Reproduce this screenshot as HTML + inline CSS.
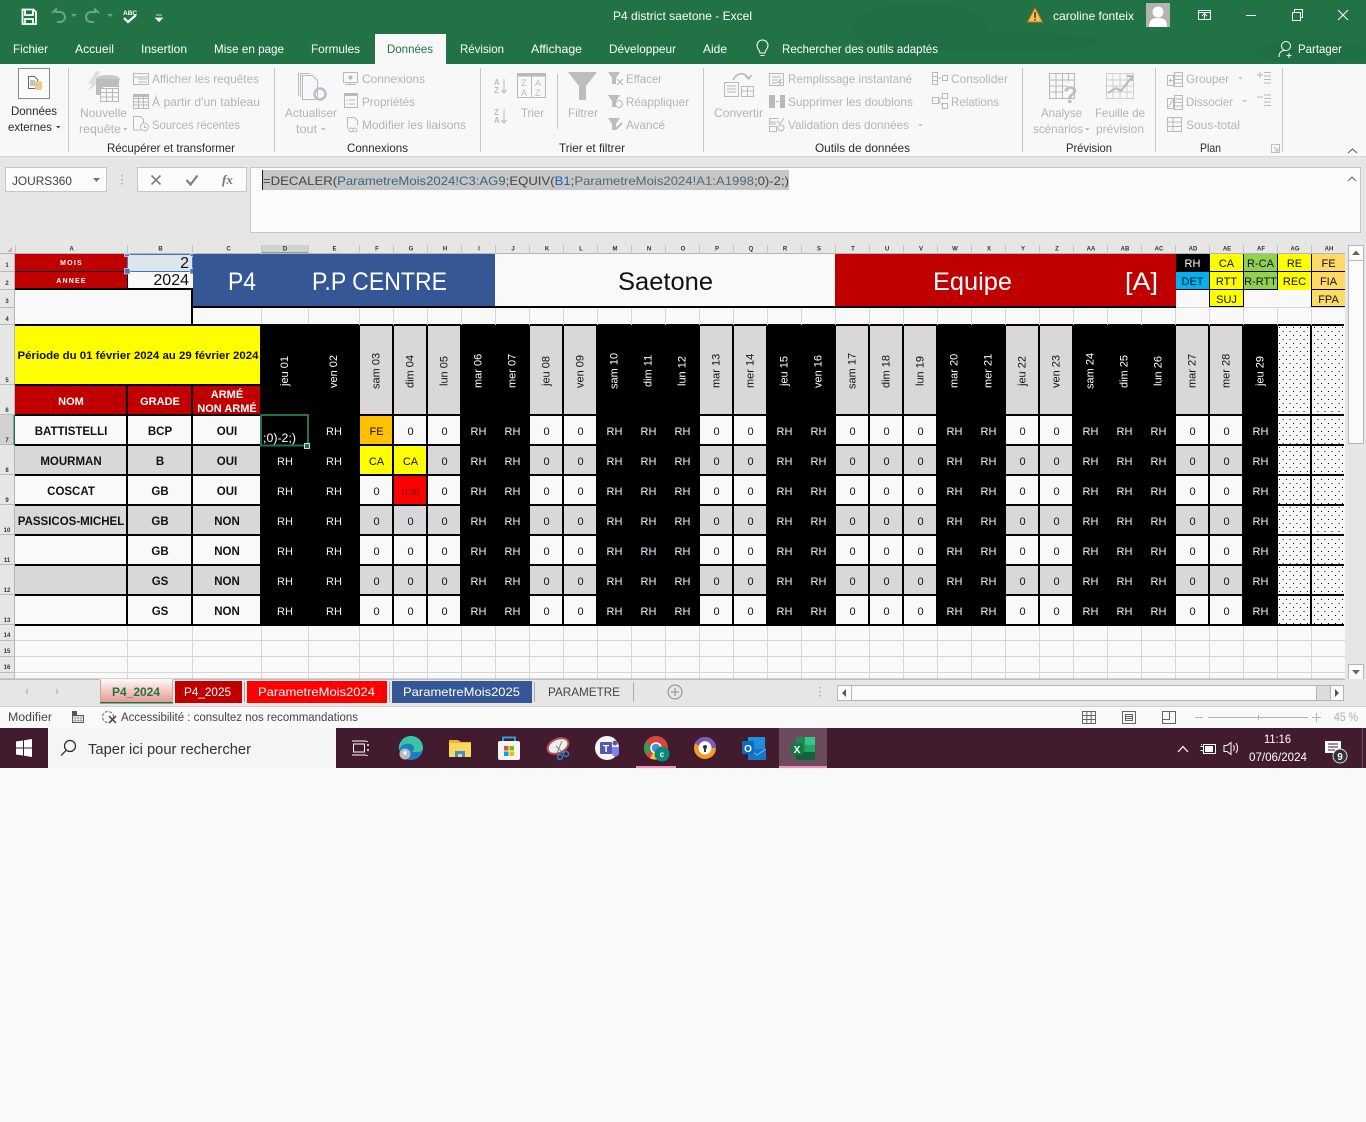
<!DOCTYPE html>
<html lang="fr"><head><meta charset="utf-8"><title>P4 district saetone - Excel</title>
<style>
html,body{margin:0;padding:0;background:#f9f9f9}
body{width:1366px;height:1122px;position:relative;overflow:hidden;font-family:"Liberation Sans",sans-serif}
#g{position:absolute;left:15px;top:324px;width:1329px;height:302px;box-sizing:border-box;padding:2px 0;background:#000;display:grid;gap:2px;
grid-template-columns:111px 63px 67px 46px 48px repeat(29,32px);
grid-template-rows:58px 28px repeat(7,28px);font-size:11px;color:#111}
#g>div{display:contents}
#g span{display:flex;align-items:center;justify-content:center;white-space:nowrap;overflow:hidden;padding:4px 0 0 1px;box-sizing:border-box}
#g>div>span:nth-child(4),#g>div>span:nth-child(5){padding-left:0}
#g .y{grid-column:1/4;background:#ff0;font:bold 11.45px "Liberation Sans",sans-serif;color:#111;padding:1px 0 0 1px}
#g .h{grid-row:1/3;background:#000;color:#fff;writing-mode:vertical-rl;transform:rotate(180deg);font-size:11px;padding:0 0 2px 0}
#g .h:nth-child(n+4){padding-right:1px}
#g .hg{background:#d9d7da;color:#111}
.hr{background:#c00000;color:#fff;font:bold 11px/14px "Liberation Sans",sans-serif;text-align:center}
.n{background:#f9f9f9;font-weight:bold;font-size:11.5px}
.gr .n,.gr .z{background:#d9d7da}
.k{background:#000;color:#eef4fa}
.z{background:#f9f9f9}
.d{background:#f9f9f9}
#c{position:absolute;left:0;top:0;z-index:2}
text{font-family:"Liberation Sans",sans-serif;font-size:12px}
.w{fill:#fff}.l{fill:#b4b4b4}.b{fill:#2b2b2b}.s{stroke:#b9b9b9;fill:none;stroke-width:1}
.f{fill:#bdbdbd}
.rn{font-size:6px;font-weight:bold;fill:#333;text-anchor:middle}
.cn{font-size:6px;font-weight:bold;fill:#333;text-anchor:middle}
.m{text-anchor:middle;font-size:11px}
</style></head><body>
<div id="g">
<span class="y" style="grid-column:1/4">Période du 01 février 2024 au 29 février 2024</span>
<span class="h" style="grid-column:4">jeu 01</span><span class="h" style="grid-column:5">ven 02</span><span class="h hg" style="grid-column:6">sam 03</span><span class="h hg" style="grid-column:7">dim 04</span><span class="h hg" style="grid-column:8">lun 05</span><span class="h" style="grid-column:9">mar 06</span><span class="h" style="grid-column:10">mer 07</span><span class="h hg" style="grid-column:11">jeu 08</span><span class="h hg" style="grid-column:12">ven 09</span><span class="h" style="grid-column:13">sam 10</span><span class="h" style="grid-column:14">dim 11</span><span class="h" style="grid-column:15">lun 12</span><span class="h hg" style="grid-column:16">mar 13</span><span class="h hg" style="grid-column:17">mer 14</span><span class="h" style="grid-column:18">jeu 15</span><span class="h" style="grid-column:19">ven 16</span><span class="h hg" style="grid-column:20">sam 17</span><span class="h hg" style="grid-column:21">dim 18</span><span class="h hg" style="grid-column:22">lun 19</span><span class="h" style="grid-column:23">mar 20</span><span class="h" style="grid-column:24">mer 21</span><span class="h hg" style="grid-column:25">jeu 22</span><span class="h hg" style="grid-column:26">ven 23</span><span class="h" style="grid-column:27">sam 24</span><span class="h" style="grid-column:28">dim 25</span><span class="h" style="grid-column:29">lun 26</span><span class="h hg" style="grid-column:30">mar 27</span><span class="h hg" style="grid-column:31">mer 28</span><span class="h" style="grid-column:32">jeu 29</span>
<span class="d" style="grid-column:33;grid-row:1/3"></span><span class="d" style="grid-column:34;grid-row:1/3"></span>
<span class="hr" style="grid-column:1;grid-row:2">NOM</span><span class="hr" style="grid-column:2;grid-row:2">GRADE</span><span class="hr" style="grid-column:3;grid-row:2">ARMÉ<br>NON ARMÉ</span>
<div><span class="n">BATTISTELLI</span><span class="n">BCP</span><span class="n">OUI</span><span class="k"></span><span class="k">RH</span><span class="z" style="background:#ffc000">FE</span><span class="z">0</span><span class="z">0</span><span class="k">RH</span><span class="k">RH</span><span class="z">0</span><span class="z">0</span><span class="k">RH</span><span class="k">RH</span><span class="k">RH</span><span class="z">0</span><span class="z">0</span><span class="k">RH</span><span class="k">RH</span><span class="z">0</span><span class="z">0</span><span class="z">0</span><span class="k">RH</span><span class="k">RH</span><span class="z">0</span><span class="z">0</span><span class="k">RH</span><span class="k">RH</span><span class="k">RH</span><span class="z">0</span><span class="z">0</span><span class="k">RH</span><span class="d"></span><span class="d"></span></div>
<div class="gr"><span class="n">MOURMAN</span><span class="n">B</span><span class="n">OUI</span><span class="k">RH</span><span class="k">RH</span><span class="z" style="background:#ff0">CA</span><span class="z" style="background:#ff0">CA</span><span class="z">0</span><span class="k">RH</span><span class="k">RH</span><span class="z">0</span><span class="z">0</span><span class="k">RH</span><span class="k">RH</span><span class="k">RH</span><span class="z">0</span><span class="z">0</span><span class="k">RH</span><span class="k">RH</span><span class="z">0</span><span class="z">0</span><span class="z">0</span><span class="k">RH</span><span class="k">RH</span><span class="z">0</span><span class="z">0</span><span class="k">RH</span><span class="k">RH</span><span class="k">RH</span><span class="z">0</span><span class="z">0</span><span class="k">RH</span><span class="d"></span><span class="d"></span></div>
<div><span class="n">COSCAT</span><span class="n">GB</span><span class="n">OUI</span><span class="k">RH</span><span class="k">RH</span><span class="z">0</span><span class="z" style="background:#f00;color:#7a0000">mal</span><span class="z">0</span><span class="k">RH</span><span class="k">RH</span><span class="z">0</span><span class="z">0</span><span class="k">RH</span><span class="k">RH</span><span class="k">RH</span><span class="z">0</span><span class="z">0</span><span class="k">RH</span><span class="k">RH</span><span class="z">0</span><span class="z">0</span><span class="z">0</span><span class="k">RH</span><span class="k">RH</span><span class="z">0</span><span class="z">0</span><span class="k">RH</span><span class="k">RH</span><span class="k">RH</span><span class="z">0</span><span class="z">0</span><span class="k">RH</span><span class="d"></span><span class="d"></span></div>
<div class="gr"><span class="n">PASSICOS-MICHEL</span><span class="n">GB</span><span class="n">NON</span><span class="k">RH</span><span class="k">RH</span><span class="z">0</span><span class="z">0</span><span class="z">0</span><span class="k">RH</span><span class="k">RH</span><span class="z">0</span><span class="z">0</span><span class="k">RH</span><span class="k">RH</span><span class="k">RH</span><span class="z">0</span><span class="z">0</span><span class="k">RH</span><span class="k">RH</span><span class="z">0</span><span class="z">0</span><span class="z">0</span><span class="k">RH</span><span class="k">RH</span><span class="z">0</span><span class="z">0</span><span class="k">RH</span><span class="k">RH</span><span class="k">RH</span><span class="z">0</span><span class="z">0</span><span class="k">RH</span><span class="d"></span><span class="d"></span></div>
<div><span class="n"></span><span class="n">GB</span><span class="n">NON</span><span class="k">RH</span><span class="k">RH</span><span class="z">0</span><span class="z">0</span><span class="z">0</span><span class="k">RH</span><span class="k">RH</span><span class="z">0</span><span class="z">0</span><span class="k">RH</span><span class="k">RH</span><span class="k">RH</span><span class="z">0</span><span class="z">0</span><span class="k">RH</span><span class="k">RH</span><span class="z">0</span><span class="z">0</span><span class="z">0</span><span class="k">RH</span><span class="k">RH</span><span class="z">0</span><span class="z">0</span><span class="k">RH</span><span class="k">RH</span><span class="k">RH</span><span class="z">0</span><span class="z">0</span><span class="k">RH</span><span class="d"></span><span class="d"></span></div>
<div class="gr"><span class="n"></span><span class="n">GS</span><span class="n">NON</span><span class="k">RH</span><span class="k">RH</span><span class="z">0</span><span class="z">0</span><span class="z">0</span><span class="k">RH</span><span class="k">RH</span><span class="z">0</span><span class="z">0</span><span class="k">RH</span><span class="k">RH</span><span class="k">RH</span><span class="z">0</span><span class="z">0</span><span class="k">RH</span><span class="k">RH</span><span class="z">0</span><span class="z">0</span><span class="z">0</span><span class="k">RH</span><span class="k">RH</span><span class="z">0</span><span class="z">0</span><span class="k">RH</span><span class="k">RH</span><span class="k">RH</span><span class="z">0</span><span class="z">0</span><span class="k">RH</span><span class="d"></span><span class="d"></span></div>
<div><span class="n"></span><span class="n">GS</span><span class="n">NON</span><span class="k">RH</span><span class="k">RH</span><span class="z">0</span><span class="z">0</span><span class="z">0</span><span class="k">RH</span><span class="k">RH</span><span class="z">0</span><span class="z">0</span><span class="k">RH</span><span class="k">RH</span><span class="k">RH</span><span class="z">0</span><span class="z">0</span><span class="k">RH</span><span class="k">RH</span><span class="z">0</span><span class="z">0</span><span class="z">0</span><span class="k">RH</span><span class="k">RH</span><span class="z">0</span><span class="z">0</span><span class="k">RH</span><span class="k">RH</span><span class="k">RH</span><span class="z">0</span><span class="z">0</span><span class="k">RH</span><span class="d"></span><span class="d"></span></div>
</div>

<svg id="c" width="1366" height="1122" viewBox="0 0 1366 1122" xmlns="http://www.w3.org/2000/svg">
<defs>
<pattern id="dots" x="1278" y="326" width="7" height="8" patternUnits="userSpaceOnUse"><rect x="1" y="1" width="1" height="1" fill="#000"/><rect x="4.5" y="5" width="1" height="1" fill="#000"/></pattern>
<pattern id="gl" x="359" y="0" width="34" height="10" patternUnits="userSpaceOnUse"><rect width="1" height="10" fill="#d6d6d6"/></pattern>
<linearGradient id="tab" x1="0" y1="0" x2="0" y2="1"><stop offset="0" stop-color="#fbfbfb"/><stop offset=".5" stop-color="#f3c9c4"/><stop offset="1" stop-color="#e79a92"/></linearGradient>
</defs>

<!-- title bar -->
<rect width="1366" height="64" fill="#217346"/>
<g fill="#206f44"><ellipse cx="920" cy="28" rx="70" ry="24"/><ellipse cx="1010" cy="42" rx="90" ry="10"/><ellipse cx="1310" cy="52" rx="56" ry="12"/></g>
<rect x="375" y="34" width="71" height="30" fill="#f8f8f8"/>
<path d="M22.5 9.5h11l2.5 2.5v12h-13.500zM25 10v5h8v-5M25 24v-5h8v5" fill="none" stroke="#fff" stroke-width="1.800"/>
<path d="M52 13l4-3.500v2.500h4a5 5 0 0 1 0 10h-3" fill="none" stroke="#6fa387" stroke-width="2"/><path d="M71 14l3 3 3-3zM107 14l3 3 3-3z" fill="#6fa387"/>
<path d="M99 13l-4-3.500v2.500h-4a5 5 0 0 0 0 10h3" fill="none" stroke="#6fa387" stroke-width="2"/>
<text x="123" y="15" font-size="6.500" style="font-size:6.500px;font-weight:bold" class="w">ABC</text>
<path d="M124 18l4 4 8-7" fill="none" stroke="#fff" stroke-width="2.200"/>
<path d="M156 15h6M155.500 18h7l-3.500 3.500z" stroke="#fff" fill="#fff" stroke-width=".8"/>
<text x="613" y="20" textLength="139" lengthAdjust="spacingAndGlyphs" class="w">P4 district saetone  -  Excel</text>
<path d="M1035 8l7.500 14h-15z" fill="#f6c24c" stroke="#d2691e"/><rect x="1034.300" y="12" width="1.500" height="6" fill="#333"/><rect x="1034.300" y="19" width="1.500" height="1.500" fill="#333"/>
<text x="1053" y="20" textLength="81" lengthAdjust="spacingAndGlyphs" class="w">caroline fonteix</text>
<rect x="1146" y="3" width="24" height="24" fill="#b3b3b3"/><circle cx="1158" cy="12" r="5.500" fill="#fff"/><path d="M1149 27c0-8 4-9 9-9s9 1 9 9z" fill="#fff"/>
<path d="M1198.500 10.500h12v9h-12zM1198.500 12.500h12M1204.500 19v-5M1202 16l2.500-2.500 2.500 2.500" fill="none" stroke="#fff"/>
<path d="M1246 15.500h10" stroke="#fff"/><path d="M1292.500 12.500h8v8h-8zM1294.500 12v-2.500h8v8h-2" fill="none" stroke="#fff"/><path d="M1338 10l10 10M1348 10l-10 10" stroke="#fff" stroke-width="1.100"/>

<text x="13" y="53" textLength="35" lengthAdjust="spacingAndGlyphs" class="w">Fichier</text>
<text x="75" y="53" textLength="39" lengthAdjust="spacingAndGlyphs" class="w">Accueil</text>
<text x="141" y="53" textLength="46" lengthAdjust="spacingAndGlyphs" class="w">Insertion</text>
<text x="214" y="53" textLength="70" lengthAdjust="spacingAndGlyphs" class="w">Mise en page</text>
<text x="311" y="53" textLength="49" lengthAdjust="spacingAndGlyphs" class="w">Formules</text>
<text x="387" y="53" textLength="46" lengthAdjust="spacingAndGlyphs" fill="#217346">Données</text>
<text x="460" y="53" textLength="44" lengthAdjust="spacingAndGlyphs" class="w">Révision</text>
<text x="531" y="53" textLength="51" lengthAdjust="spacingAndGlyphs" class="w">Affichage</text>
<text x="609" y="53" textLength="67" lengthAdjust="spacingAndGlyphs" class="w">Développeur</text>
<text x="703" y="53" textLength="24" lengthAdjust="spacingAndGlyphs" class="w">Aide</text>
<path d="M760 53c0-3-3-4-3-7.500a5.500 5.500 0 0 1 11 0c0 3.500-3 4.500-3 7.500zM760.500 55.500h4" fill="none" stroke="#fff"/>
<text x="782" y="53" textLength="156" lengthAdjust="spacingAndGlyphs" class="w">Rechercher des outils adaptés</text>
<circle cx="1286" cy="46" r="4.500" fill="none" stroke="#fff"/><path d="M1279 57c0-5 3-6.500 6-6.500M1289 53v5M1286.500 55.500h5" fill="none" stroke="#fff"/>
<text x="1298" y="53" textLength="44" lengthAdjust="spacingAndGlyphs" class="w">Partager</text>

<!-- ribbon -->
<rect y="64" width="1366" height="92" fill="#f8f8f8"/><rect y="156" width="1366" height="1" fill="#d8d8d8"/>
<path d="M68.500 68v84M274.500 68v84M480.500 68v84M703.500 68v84M1022.500 68v84M1155.500 68v84M1282.500 68v84M557.500 74v55" stroke="#c6c6c6" fill="none"/>
<rect x="18.500" y="68.500" width="31" height="30" fill="#fbfbfb" stroke="#8a8a8a"/>
<path d="M28.500 76.500h6l3 3v9h-9z" fill="#fff" stroke="#666"/><path d="M30 81h5M30 83h5M30 85h5" stroke="#888"/><rect x="35" y="81" width="7" height="9" rx="2" fill="#f2c691"/>
<text x="11" y="115" textLength="46" lengthAdjust="spacingAndGlyphs" class="b">Données</text>
<text x="8" y="131" textLength="44" lengthAdjust="spacingAndGlyphs" class="b">externes</text><path d="M56 126h4.500l-2.250 2.500z" fill="#444"/>

<path d="M96 71l-8 13h4l-5 8 13-11h-5l5-9z" fill="#dedede"/><ellipse cx="108" cy="79" rx="12" ry="4" fill="#c8c8c8"/><path d="M96 79v16h7v-8h16v-8" fill="#bdbdbd"/>
<rect x="100.500" y="88.500" width="18" height="13" fill="#f8f8f8" stroke="#b9b9b9"/><path d="M100 92.500h19M100 97h19M106.500 88v13M112.500 88v13" class="s"/>
<g class="l"><text x="80" y="117" textLength="47" lengthAdjust="spacingAndGlyphs">Nouvelle</text><text x="79" y="133" textLength="42" lengthAdjust="spacingAndGlyphs">requête</text></g><path d="M123 128h4.500l-2.250 2.500z" fill="#b9b9b9"/>
<path d="M133.500 73.500h15v11h-15zM133.500 77h15M138 79h9M138 82h9" class="s"/>
<rect x="133.500" y="94.500" width="15" height="14" class="s"/><path d="M133.500 98.500h15M133.500 102h15M133.500 105h15M138.500 95v13M143.500 95v13" class="s"/><rect x="133" y="94" width="16" height="3" fill="#b9b9b9"/>
<path d="M133.500 116.500h7l3 3v4M141 130h-7.500v-13.500" class="s"/><circle cx="144.500" cy="127" r="4" class="s"/><path d="M144.500 125v2.500h2" class="s"/>
<g class="l"><text x="152" y="83" textLength="107" lengthAdjust="spacingAndGlyphs">Afficher les requêtes</text><text x="152" y="106" textLength="108" lengthAdjust="spacingAndGlyphs">À partir d'un tableau</text><text x="152" y="129" textLength="88" lengthAdjust="spacingAndGlyphs">Sources récentes</text></g>
<text x="107" y="152" textLength="128" lengthAdjust="spacingAndGlyphs" class="b">Récupérer et transformer</text>

<path d="M298.500 72.500v23M300.500 73.500h9l1 0M302.500 75.500h10l5 5v19h-15z" class="s"/><path d="M300.500 73v24" class="s"/>
<circle cx="320" cy="94" r="5.500" fill="none" stroke="#c4b8d2" stroke-width="2.500"/>
<g class="l"><text x="285" y="117" textLength="52" lengthAdjust="spacingAndGlyphs">Actualiser</text><text x="296" y="133" textLength="21" lengthAdjust="spacingAndGlyphs">tout</text></g><path d="M321 128h4.500l-2.250 2.500z" fill="#b9b9b9"/>
<path d="M343.500 72.500h14v10h-14zM350.500 82.500v2M345 84.500h11" class="s"/><circle cx="350.500" cy="77.500" r="2" fill="#b9b9b9"/>
<rect x="344.500" y="93.500" width="13" height="14" class="s"/><rect x="344" y="93" width="14" height="3" fill="#b9b9b9"/><path d="M349 100h6M349 104h6M346 100h1.500M346 104h1.500" class="s"/>
<path d="M347.500 117.500h7l3 3v5M347.500 117.500v11" class="s"/><circle cx="351" cy="130" r="2" class="s"/><circle cx="355" cy="130" r="2" class="s"/>
<g class="l"><text x="362" y="83" textLength="63" lengthAdjust="spacingAndGlyphs">Connexions</text><text x="362" y="106" textLength="53" lengthAdjust="spacingAndGlyphs">Propriétés</text><text x="362" y="129" textLength="104" lengthAdjust="spacingAndGlyphs">Modifier les liaisons</text></g>
<text x="347" y="152" textLength="61" lengthAdjust="spacingAndGlyphs" class="b">Connexions</text>

<g style="font-weight:bold" class="f"><text x="494" y="85" style="font-size:8px">A</text><text x="494" y="93" style="font-size:8px">Z</text><text x="494" y="115" style="font-size:8px">Z</text><text x="494" y="123" style="font-size:8px">A</text></g>
<path d="M504 79v13M501.500 90l2.500 3 2.500-3M504 109v13M501.500 120l2.500 3 2.500-3" class="s"/>
<rect x="517.500" y="73.500" width="28" height="24" class="s"/><rect x="517" y="73" width="29" height="3.500" fill="#b9b9b9"/><path d="M531.500 76v21" class="s"/>
<g class="f"><text x="521" y="86" style="font-size:9px">Z</text><text x="535" y="86" style="font-size:9px">A</text><text x="521" y="96" style="font-size:9px">A</text><text x="535" y="96" style="font-size:9px">Z</text></g>
<text x="521" y="117" textLength="23" lengthAdjust="spacingAndGlyphs" class="l">Trier</text>
<path d="M568 72h29l-11 14v14h-7v-14z" fill="#bdbdbd"/>
<text x="568" y="117" textLength="30" lengthAdjust="spacingAndGlyphs" class="l">Filtrer</text>
<path d="M608 72h12l-4 6v6h-4v-6z" class="f"/><path d="M617 79l6 6M623 79l-6 6" stroke="#b9b9b9" stroke-width="1.200"/>
<path d="M608 95h12l-4 6v6h-4v-6z" class="f"/><circle cx="619" cy="104" r="3.500" class="s"/>
<path d="M608 118h12l-4 6v6h-4v-6z" class="f"/><path d="M616 129l6-6" stroke="#b9b9b9" stroke-width="2"/>
<g class="l"><text x="626" y="83" textLength="36" lengthAdjust="spacingAndGlyphs">Effacer</text><text x="626" y="106" textLength="63" lengthAdjust="spacingAndGlyphs">Réappliquer</text><text x="626" y="129" textLength="39" lengthAdjust="spacingAndGlyphs">Avancé</text></g>
<text x="559" y="152" textLength="66" lengthAdjust="spacingAndGlyphs" class="b">Trier et filtrer</text>

<path d="M724.500 82.500h14v14h-14zM727 86h9M727 89h9M727 92h9M741.500 86.500h12v10h-12zM741.500 91h12M747.500 87v9" class="s"/><path d="M733 80c4-8 12-8 15-2M745 75l3.500 4 3-4" fill="none" stroke="#b9b9b9" stroke-width="1.500"/>
<text x="714" y="117" textLength="49" lengthAdjust="spacingAndGlyphs" class="l">Convertir</text>
<path d="M769.500 73.500h14v12h-14zM772 77h9M772 80h6M772 83h5" class="s"/><path d="M780 79l-3 4h3l-2 4 5-5h-3l2-3z" class="f"/>
<rect x="769" y="95" width="6" height="13" fill="#b9b9b9"/><rect x="780" y="95" width="5" height="13" fill="#b9b9b9"/><path d="M776 101.500h3" class="s"/>
<path d="M769.500 118.500h9M769.500 122h6M769.500 118v6h7M769.500 126.500h7v5h-7z" class="s"/><path d="M777 121l3 3 4-6" class="s"/><circle cx="781" cy="128" r="3" class="s"/>
<g class="l"><text x="788" y="83" textLength="124" lengthAdjust="spacingAndGlyphs">Remplissage instantané</text><text x="788" y="106" textLength="125" lengthAdjust="spacingAndGlyphs">Supprimer les doublons</text><text x="788" y="129" textLength="121" lengthAdjust="spacingAndGlyphs">Validation des données</text></g><path d="M918 124h5l-2.500 2.500z" fill="#c8c8c8"/>
<text x="815" y="152" textLength="95" lengthAdjust="spacingAndGlyphs" class="b">Outils de données</text>
<path d="M932.500 72.500h5v12h-5zM932.500 76.500h5M932.500 80.500h5M942.500 75.500h5v5h-5zM938 78h3" class="s"/>
<path d="M932.500 97.500h6v6h-6zM942.500 93.500h5v5h-5zM942.500 103.500h5v5h-5zM939 100l3-3M939 101l3 4" class="s"/>
<g class="l"><text x="951" y="83" textLength="57" lengthAdjust="spacingAndGlyphs">Consolider</text><text x="951" y="106" textLength="48" lengthAdjust="spacingAndGlyphs">Relations</text></g>

<path d="M1049.500 73.500h25v25h-25zM1049.500 80h25M1049.500 86h18M1049.500 92h14M1056 73.500v25M1062.500 73.500v25M1068.500 73.500v8" class="s"/>
<text x="1063" y="103" style="font-size:24px;font-weight:bold" class="f">?</text>
<path d="M1106.500 73.500h27v25h-27zM1106.500 80h27M1106.500 86h27M1106.500 92h27M1113 73.500v25M1120 73.500v25M1127 73.500v25" stroke="#cfcfcf" fill="none"/><path d="M1108 93l8-5 5 3 10-13M1127 76h5v5" fill="none" stroke="#b9b9b9" stroke-width="2"/>
<g class="l"><text x="1041" y="117" textLength="41" lengthAdjust="spacingAndGlyphs">Analyse</text><text x="1033" y="133" textLength="50" lengthAdjust="spacingAndGlyphs">scénarios</text><text x="1095" y="117" textLength="50" lengthAdjust="spacingAndGlyphs">Feuille de</text><text x="1096" y="133" textLength="48" lengthAdjust="spacingAndGlyphs">prévision</text></g><path d="M1085 128h4.500l-2.250 2.500z" fill="#b9b9b9"/>
<text x="1066" y="152" textLength="46" lengthAdjust="spacingAndGlyphs" class="b">Prévision</text>

<path d="M1167.500 75.500h6v10h-6zM1174.500 72.500h8v14h-8zM1174.500 76h8M1174.500 79.500h8M1174.500 83h8M1168.500 80.500h4M1170.500 78.500v4" class="s"/>
<path d="M1167.500 98.500h6v10h-6zM1174.500 95.500h8v14h-8zM1174.500 99h8M1174.500 102.500h8M1174.500 106h8M1168.500 107l4-7" class="s"/>
<path d="M1167.500 117.500h14v14h-14zM1167.500 122h14M1167.500 126.500h14M1173 117.500v14" class="s"/>
<g class="l"><text x="1186" y="83" textLength="43" lengthAdjust="spacingAndGlyphs">Grouper</text><text x="1186" y="106" textLength="47" lengthAdjust="spacingAndGlyphs">Dissocier</text><text x="1186" y="129" textLength="54" lengthAdjust="spacingAndGlyphs">Sous-total</text></g>
<path d="M1238 77h5l-2.500 2.500zM1242 100h5l-2.500 2.500z" fill="#c8c8c8"/>
<path d="M1257 75h6M1260 72v6M1264 72.500h7M1264 76h7M1264 79.500h7M1264 83h7M1257 97h6M1264 95h7M1264 98.500h7M1264 102h7M1264 105.500h7" class="s"/>
<text x="1200" y="152" textLength="21" lengthAdjust="spacingAndGlyphs" class="b">Plan</text>
<path d="M1271.500 144.500h8v8h-8zM1274 147l4 4M1278 148v3h-3" stroke="#bdbdbd" fill="none"/>
<path d="M1348 153l4.500-4 4.500 4" fill="none" stroke="#555"/>

<!-- formula bar -->
<rect y="157" width="1366" height="88" fill="#e6e7e5"/>
<rect x="5.500" y="167.500" width="101" height="24" fill="#fbfbfb" stroke="#c6c6c6"/>
<text x="12" y="185" textLength="60" lengthAdjust="spacingAndGlyphs" fill="#444">JOURS360</text><path d="M93 178h7l-3.500 4z" fill="#777"/>
<path d="M122 175v1.500M122 179v1.500M122 183v1.500" stroke="#aaa" stroke-width="1.500"/>
<rect x="137.500" y="167.500" width="109" height="24" fill="#fbfbfb" stroke="#c6c6c6"/>
<path d="M151.500 175.500l9 9M160.500 175.500l-9 9" stroke="#808080" stroke-width="1.600"/><path d="M186.500 180l4 4.500 7-9" fill="none" stroke="#808080" stroke-width="2.200"/>
<text x="222" y="184" style="font-family:'Liberation Serif',serif;font-style:italic;font-weight:bold;font-size:13px" fill="#777">fx</text>
<rect x="250.500" y="167.500" width="1110" height="65" fill="#fbfbfb" stroke="#c6c6c6"/>
<rect x="262" y="170" width="527" height="20" fill="#c6c6c6"/><rect x="262" y="170" width="1" height="20" fill="#222"/>
<text x="263" y="185" textLength="526" lengthAdjust="spacingAndGlyphs" fill="#444">=DECALER(<tspan fill="#3a6480">ParametreMois2024!C3:AG9</tspan>;EQUIV(<tspan fill="#1e5fb0">B1</tspan>;<tspan fill="#4f6b73">ParametreMois2024!A1:A1998</tspan>;0)-2;)</text>
<path d="M1348 181l4-4 4 4" fill="none" stroke="#666"/>

<!-- sheet frame -->
<rect y="245" width="1346" height="9" fill="#e6e7e5"/>
<rect y="254" width="15" height="426" fill="#e6e7e5"/>
<rect x="261" y="245" width="47" height="9" fill="#d2d2d2"/><rect x="261" y="252.500" width="47" height="1.500" fill="#217346"/>
<rect y="253" width="1346" height="1" fill="#b5b5b5"/>
<rect y="254" x="14" width="1" height="426" fill="#b5b5b5"/>
<rect x="0" y="415" width="15" height="30" fill="#d2d2d2"/><rect x="13.500" y="415" width="1.500" height="30" fill="#217346"/>
<path d="M12 247v5h-5z" fill="#bbb"/>
<path d="M15.500 245v9M127.500 245v9M192.500 245v9M261.500 245v9M308.500 245v9M359.500 245v9M393.500 245v9M427.500 245v9M461.500 245v9M495.500 245v9M529.500 245v9M563.500 245v9M597.500 245v9M631.500 245v9M665.500 245v9M699.500 245v9M733.500 245v9M767.500 245v9M801.500 245v9M835.500 245v9M869.500 245v9M903.500 245v9M937.500 245v9M971.500 245v9M1005.500 245v9M1039.500 245v9M1073.500 245v9M1107.500 245v9M1141.500 245v9M1175.500 245v9M1209.500 245v9M1243.500 245v9M1277.500 245v9M1311.500 245v9M1345.500 245v9" stroke="#c4c4c4" fill="none"/>
<path d="M0 271.500h15M0 289.500h15M0 307.500h15M0 324.500h15M0 384.500h15M0 414.500h15M0 444.500h15M0 474.500h15M0 504.500h15M0 534.500h15M0 564.500h15M0 594.500h15M0 624.500h15M0 640.500h15M0 656.500h15M0 672.500h15" stroke="#b9b9b9"/>
<g class="cn"><text class="cn" x="71.500" y="250.500">A</text><text class="cn" x="160.500" y="250.500">B</text><text class="cn" x="228.500" y="250.500">C</text><text class="cn" x="285" y="250.500">D</text><text class="cn" x="334.500" y="250.500">E</text><text class="cn" x="377" y="250.500">F</text><text class="cn" x="411" y="250.500">G</text><text class="cn" x="445" y="250.500">H</text><text class="cn" x="479" y="250.500">I</text><text class="cn" x="513" y="250.500">J</text><text class="cn" x="547" y="250.500">K</text><text class="cn" x="581" y="250.500">L</text><text class="cn" x="615" y="250.500">M</text><text class="cn" x="649" y="250.500">N</text><text class="cn" x="683" y="250.500">O</text><text class="cn" x="717" y="250.500">P</text><text class="cn" x="751" y="250.500">Q</text><text class="cn" x="785" y="250.500">R</text><text class="cn" x="819" y="250.500">S</text><text class="cn" x="853" y="250.500">T</text><text class="cn" x="887" y="250.500">U</text><text class="cn" x="921" y="250.500">V</text><text class="cn" x="955" y="250.500">W</text><text class="cn" x="989" y="250.500">X</text><text class="cn" x="1023" y="250.500">Y</text><text class="cn" x="1057" y="250.500">Z</text><text class="cn" x="1091" y="250.500">AA</text><text class="cn" x="1125" y="250.500">AB</text><text class="cn" x="1159" y="250.500">AC</text><text class="cn" x="1193" y="250.500">AD</text><text class="cn" x="1227" y="250.500">AE</text><text class="cn" x="1261" y="250.500">AF</text><text class="cn" x="1295" y="250.500">AG</text><text class="cn" x="1329" y="250.500">AH</text></g>
<text class="rn" x="7" y="267">1</text><text class="rn" x="7" y="285">2</text><text class="rn" x="7" y="303">3</text><text class="rn" x="7" y="321">4</text><text class="rn" x="7" y="382">5</text><text class="rn" x="7" y="412">6</text><text class="rn" x="7" y="442">7</text><text class="rn" x="7" y="472">8</text><text class="rn" x="7" y="502">9</text><text class="rn" x="7" y="532">10</text><text class="rn" x="7" y="562">11</text><text class="rn" x="7" y="592">12</text><text class="rn" x="7" y="622">13</text><text class="rn" x="7" y="637">14</text><text class="rn" x="7" y="653">15</text><text class="rn" x="7" y="669">16</text>

<!-- top cells -->
<rect x="15" y="254" width="1330" height="70" fill="#f9f9f9"/>
<rect x="359" y="308" width="986" height="17" fill="url(#gl)"/>
<path d="M261.500 308v16M308.500 308v16" stroke="#d6d6d6"/>
<rect x="193" y="306" width="983" height="2" fill="#000"/>
<rect x="15" y="254" width="112" height="17" fill="#c00000"/><rect x="15" y="272" width="112" height="16" fill="#c00000"/>
<rect x="15" y="271" width="112" height="1" fill="#000"/><rect x="15" y="288" width="178" height="2" fill="#000"/>
<rect x="127" y="254" width="1" height="34" fill="#000"/><rect x="191" y="290" width="2" height="34" fill="#000"/>
<text x="71.500" y="265" text-anchor="middle" style="font-size:7px;font-weight:bold;letter-spacing:1.200px" class="w">MOIS</text>
<text x="71.500" y="283" text-anchor="middle" style="font-size:7px;font-weight:bold;letter-spacing:1.200px" class="w">ANNEE</text>
<rect x="128" y="255" width="64" height="16" fill="#dde6ec"/>
<text x="189" y="268" text-anchor="end" style="font-size:16px" fill="#111">2</text><text x="189" y="285" text-anchor="end" style="font-size:16px" fill="#111">2024</text>
<rect x="127.500" y="254.500" width="65" height="17" fill="none" stroke="#4472c4"/>
<g fill="#4472c4" stroke="#fff" stroke-width=".6"><rect x="124.500" y="254" width="5" height="2.500"/><rect x="190" y="254" width="5" height="2.500"/><rect x="124.500" y="268.500" width="5.500" height="5.500"/><rect x="190" y="268.500" width="5.500" height="5.500"/></g>
<rect x="193" y="254" width="302" height="52" fill="#365796"/>
<text x="228" y="290" textLength="28" lengthAdjust="spacingAndGlyphs" style="font-size:25px" class="w">P4</text>
<text x="312" y="290" textLength="135" lengthAdjust="spacingAndGlyphs" style="font-size:25px" class="w">P.P CENTRE</text>
<text x="618" y="290" textLength="95" lengthAdjust="spacingAndGlyphs" style="font-size:25px" fill="#111">Saetone</text>
<rect x="835" y="254" width="341" height="52" fill="#c00000"/>
<text x="933" y="290" textLength="79" lengthAdjust="spacingAndGlyphs" style="font-size:25px" class="w">Equipe</text>
<text x="1125" y="290" textLength="33" lengthAdjust="spacingAndGlyphs" style="font-size:25px" class="w">[A]</text>
<!-- legend -->
<rect x="1176" y="254" width="33" height="18" fill="#000"/><rect x="1176" y="272" width="33" height="18" fill="#00b0f0"/>
<rect x="1210" y="254" width="33" height="53" fill="#ff0"/><rect x="1244" y="254" width="33" height="36" fill="#92d050"/><rect x="1278" y="254" width="33" height="36" fill="#ff0"/><rect x="1312" y="254" width="33" height="53" fill="#ffd966"/>
<path d="M1176 271.500h169M1176 289.500h101M1312 289.500h33M1209.500 254v53M1243.500 254v53M1277.500 254v36M1311.500 254v53M1210 306.500h34M1312 306.500h33" stroke="#000" fill="none"/>
<rect x="1176" y="307" width="169" height="1" fill="#d6d6d6"/>
<text class="m w" x="1192.500" y="267">RH</text><text class="m" x="1192.500" y="285" fill="#111">DET</text>
<text class="m" x="1226.500" y="267" fill="#111">CA</text><text class="m" x="1226.500" y="285" fill="#111">RTT</text><text class="m" x="1226.500" y="303" fill="#111">SUJ</text>
<text class="m" x="1260.500" y="267" fill="#111">R-CA</text><text class="m" x="1260.500" y="285" fill="#111">R-RTT</text>
<text class="m" x="1294.500" y="267" fill="#111">RE</text><text class="m" x="1294.500" y="285" fill="#111">REC</text>
<text class="m" x="1328.500" y="267" fill="#111">FE</text><text class="m" x="1328.500" y="285" fill="#111">FIA</text><text class="m" x="1328.500" y="303" fill="#111">FPA</text>

<!-- dots -->
<rect x="1278" y="326" width="32" height="298" fill="url(#dots)"/>
<rect x="1312" y="326" width="32" height="298" fill="url(#dots)"/>
<path d="M1278 415h66M1278 445h66M1278 475h66M1278 505h66M1278 535h66M1278 565h66M1278 595h66" stroke="#000" stroke-width="2"/>
<path d="M1277 326v298M1311 326v298" stroke="#000" stroke-width="2"/>

<!-- active cell -->
<rect x="261" y="415" width="47" height="30.500" fill="none" stroke="#217346" stroke-width="2"/>
<text x="263" y="442" textLength="33" lengthAdjust="spacingAndGlyphs" style="font-size:11.500px" class="w">;0)-2;)</text>
<rect x="304.500" y="443.500" width="5" height="5" fill="#217346" stroke="#fff" stroke-width=".8"/>
<rect x="13.500" y="415" width="1.500" height="30" fill="#217346"/>

<!-- lower grid -->
<rect x="15" y="626" width="1330" height="53" fill="#f9f9f9"/>
<rect x="359" y="626" width="986" height="53" fill="url(#gl)"/>
<path d="M127.500 626v53M192.500 626v53M261.500 626v53M308.500 626v53M15 640.500h1330M15 656.500h1330M15 672.500h1330" stroke="#d6d6d6" fill="none"/>

<!-- v scrollbar -->
<rect x="1345" y="245" width="21" height="435" fill="#e6e7e5"/>
<rect x="1348.500" y="245.500" width="15" height="15" fill="#fbfbfb" stroke="#b5b5b5"/><path d="M1352 255l4-4.500 4 4.500z" fill="#666"/>
<rect x="1348.500" y="260.500" width="15" height="183" fill="#fbfbfb" stroke="#b5b5b5"/>
<rect x="1348.500" y="664.500" width="15" height="15" fill="#fbfbfb" stroke="#b5b5b5"/><path d="M1352 670l4 4.500 4-4.500z" fill="#666"/>

<!-- tabs -->
<rect y="679" width="1366" height="28" fill="#e6e7e5"/><rect y="678.500" width="1345" height="1.200" fill="#aaa"/>
<path d="M28 688v7l-3-3.500zM56 688v7l3-3.500z" fill="#c4c4c4"/>
<rect x="100.500" y="679" width="72" height="23" fill="url(#tab)"/><rect x="100" y="702" width="73" height="1.500" fill="#217346"/>
<path d="M100.500 680v22M172.500 680v22" stroke="#b0b0b0" fill="none"/>
<text x="112" y="696" textLength="48" lengthAdjust="spacingAndGlyphs" style="font-weight:bold" fill="#217346">P4_2024</text>
<rect x="175" y="681" width="67" height="22" fill="#c00000"/><text x="184" y="696" textLength="47" lengthAdjust="spacingAndGlyphs" class="w">P4_2025</text>
<rect x="247" y="681" width="140" height="22" fill="#f00"/><text x="258" y="696" textLength="117" lengthAdjust="spacingAndGlyphs" class="w">ParametreMois2024</text>
<rect x="392" y="681" width="140" height="22" fill="#365796"/><text x="403" y="696" textLength="117" lengthAdjust="spacingAndGlyphs" class="w">ParametreMois2025</text>
<path d="M244.500 682v20M389.500 682v20M534.500 682v20M633.500 682v20" stroke="#aaa" fill="none"/>
<text x="548" y="696" textLength="72" lengthAdjust="spacingAndGlyphs" fill="#444">PARAMETRE</text>
<circle cx="675" cy="692" r="7" fill="none" stroke="#888"/><path d="M675 688v8M671 692h8" stroke="#888"/>
<path d="M820 687v1.500M820 691v1.500M820 695v1.500" stroke="#aaa" stroke-width="1.500"/>
<rect x="837.500" y="685.500" width="506" height="15" fill="#dcdcdc" stroke="#b5b5b5"/>
<rect x="851.500" y="685.500" width="465" height="15" fill="#fbfbfb" stroke="#b5b5b5"/>
<rect x="837.500" y="685.500" width="14" height="15" fill="#fbfbfb" stroke="#b5b5b5"/><path d="M846 689v8l-4-4z" fill="#555"/>
<rect x="1330.500" y="685.500" width="13" height="15" fill="#fbfbfb" stroke="#b5b5b5"/><path d="M1335 689v8l4-4z" fill="#555"/>

<!-- status -->
<rect y="707" width="1366" height="21" fill="#f9f9f9"/><rect y="706" width="1366" height="1" fill="#cfcfcf"/>
<text x="8" y="721" textLength="44" lengthAdjust="spacingAndGlyphs" style="font-size:11.500px" fill="#444">Modifier</text>
<rect x="72" y="711" width="5" height="4" fill="#555"/><rect x="72.500" y="715.500" width="11" height="7" fill="none" stroke="#555"/><path d="M72 718h12M72 720.500h12M75 716v6M78 716v6M81 716v6" stroke="#777" stroke-width=".6"/>
<circle cx="108" cy="717" r="5.500" fill="none" stroke="#666" stroke-dasharray="3 1.500"/><path d="M109 716l7 7M116 716l-7 7" stroke="#444" stroke-width="1.500"/>
<text x="121" y="721" textLength="237" lengthAdjust="spacingAndGlyphs" style="font-size:11.500px" fill="#444">Accessibilité : consultez nos recommandations</text>
<path d="M1082.500 711.500h13v12h-13zM1082.500 715.500h13M1082.500 719.500h13M1086.800 711.500v12M1091.200 711.500v12" fill="none" stroke="#666"/>
<path d="M1122.500 711.500h13v12h-13zM1125.500 714.500h7v6h-7zM1126 716.500h6M1126 718.500h6" fill="none" stroke="#666"/>
<path d="M1162.500 711.500h13v12h-13zM1162.500 719.500h7v-8" fill="none" stroke="#666"/>
<path d="M1195 717.500h8M1208 717.500h100M1258.500 715v5M1312 717.500h9M1316.500 713v9" stroke="#b5b5b5" fill="none"/>
<text x="1334" y="721" textLength="24" lengthAdjust="spacingAndGlyphs" style="font-size:11.500px" fill="#b0b0b0">45 %</text>

<!-- taskbar -->
<rect y="728" width="1366" height="40" fill="#421b2e"/>
<path d="M16 741.500l7-1v7h-7zM24 740.300l8-1.300v8.500h-8zM16 748.500h7v7l-7-1zM24 748.500h8v8.500l-8-1.300z" fill="#fff"/>
<rect x="48" y="728" width="288" height="40" fill="#f5f5f5"/>
<circle cx="70" cy="746" r="5.500" fill="none" stroke="#222" stroke-width="1.200"/><path d="M66 750.500l-5 5" stroke="#222" stroke-width="1.200"/>
<text x="88" y="754" textLength="163" lengthAdjust="spacingAndGlyphs" style="font-size:14.500px" fill="#333">Taper ici pour rechercher</text>
<path d="M352 741h14M352 755h14M353.500 744h11v8h-11z" fill="none" stroke="#fff"/><path d="M367 745h2M367 750h2M367 741v1M367 755v1" stroke="#fff" stroke-width="1.500"/>
<!-- edge -->
<circle cx="411" cy="748" r="12" fill="#1a7fc4"/><path d="M411 736a12 12 0 0 1 12 12c0 3-2 4-5 4h-6c3-2 3-7-2-8-5-1-9 1-11 6a12 12 0 0 1 12-14z" fill="#3cc4a0"/><circle cx="405" cy="754" r="5.500" fill="#b9b9b9"/><circle cx="405" cy="753" r="2" fill="#eee"/>
<!-- folder -->
<path d="M449 740h9l3 2h10v15h-22z" fill="#e9b62f"/><rect x="449" y="743" width="22" height="14" fill="#fbd75b"/><path d="M455 757v-6h10v6h-3v-3h-4v3z" fill="#3f8fd8"/>
<!-- store -->
<rect x="498" y="741" width="22" height="19" rx="2" fill="#f4f4f4"/><path d="M503 741v-3.500h12v3.500" fill="none" stroke="#26a0da" stroke-width="2"/><rect x="504" y="746" width="4.500" height="4.500" fill="#f25022"/><rect x="509.500" y="746" width="4.500" height="4.500" fill="#7fba00"/><rect x="504" y="751.500" width="4.500" height="4.500" fill="#00a4ef"/><rect x="509.500" y="751.500" width="4.500" height="4.500" fill="#ffb900"/>
<!-- snip -->
<ellipse cx="558" cy="746" rx="11" ry="7" transform="rotate(-25 558 746)" fill="#eee" stroke="#b5504f" stroke-width="2"/><path d="M556 746l7 7M562 741l-5 12" stroke="#888"/><circle cx="560" cy="757" r="2.500" fill="none" stroke="#1f88d0" stroke-width="1.500"/><circle cx="566" cy="754" r="2.500" fill="none" stroke="#1f88d0" stroke-width="1.500"/>
<!-- teams -->
<circle cx="607" cy="748" r="12" fill="#f5f5f5"/><rect x="600" y="742" width="12" height="12" rx="1" fill="#5558af"/><text x="606" y="752" text-anchor="middle" style="font-size:10px;font-weight:bold" class="w">T</text><circle cx="615" cy="743" r="2.500" fill="#5558af"/><path d="M612 747h7v6a3.500 3.500 0 0 1-7 0z" fill="#7b83eb"/>
<!-- chrome -->
<circle cx="656" cy="748" r="12" fill="#d9483b"/><path d="M656 748l-10.400 6a12 12 0 0 1 0-12z" fill="#30a04f"/><path d="M656 748l10.400 0a12 12 0 0 1-16.400 10.400z" fill="#f7c52c"/><circle cx="656" cy="748" r="5" fill="#4a90e2" stroke="#fff" stroke-width="1.500"/><circle cx="662" cy="754" r="7.500" fill="#0b8a7a"/><text x="662" y="757" text-anchor="middle" style="font-size:8px;font-weight:bold" class="w">c</text>
<rect x="636" y="766" width="40" height="2" fill="#f48fc0"/>
<!-- avast -->
<circle cx="705" cy="748" r="11" fill="#f59a23"/><path d="M705 737a11 11 0 0 1 11 11h-5a6 6 0 0 0-12-2l-4-3a11 11 0 0 1 10-6z" fill="#7a5cc8"/><circle cx="705" cy="748" r="6.500" fill="#fff"/><circle cx="705" cy="747" r="2" fill="#333"/><rect x="704" y="748" width="2" height="4" fill="#333"/>
<!-- outlook -->
<rect x="748" y="737" width="17" height="12" fill="#1d8fe0"/><path d="M748 749h18v11h-18z" fill="#1a74c4"/><path d="M748 749l9 6 9-6" fill="none" stroke="#5cc0f5"/><rect x="742" y="741" width="12" height="13" fill="#0f6cbd"/><text x="748" y="752" text-anchor="middle" style="font-size:10px;font-weight:bold" class="w">O</text>
<!-- excel -->
<rect x="779" y="728" width="48" height="40" fill="#6a4c5c"/><rect x="779" y="766" width="48" height="2" fill="#f48fc0"/>
<rect x="796" y="737" width="19" height="23" rx="1" fill="#1d8b53"/><rect x="805" y="737" width="10" height="8" fill="#35c585"/><rect x="805" y="745" width="10" height="7" fill="#22a566"/><rect x="796" y="752" width="19" height="8" fill="#155f3a"/>
<rect x="791" y="743" width="12" height="12" fill="#107c41"/><text x="797" y="753" text-anchor="middle" style="font-size:10px;font-weight:bold" class="w">X</text>
<!-- tray -->
<path d="M1178 752l5-5.500 5 5.500" fill="none" stroke="#fff" stroke-width="1.200"/>
<path d="M1201 744.500h1M1200.500 746.500h3v4h-3M1203.500 744.500h12v9h-12z" fill="none" stroke="#fff"/><rect x="1205" y="746" width="8" height="6" fill="#fff"/>
<path d="M1224 745.500h3l4-3v12l-4-3h-3zM1233.500 745c1 2 1 4 0 6M1236 743c2 3 2 7 0 10" fill="none" stroke="#fff"/>
<text x="1264" y="743" textLength="27" lengthAdjust="spacingAndGlyphs" class="w">11:16</text>
<text x="1249" y="761" textLength="58" lengthAdjust="spacingAndGlyphs" class="w">07/06/2024</text>
<path d="M1325 741h16v12h-16z" fill="#fff"/><path d="M1328 744h10M1328 747h10M1328 750h7" stroke="#421b2e"/>
<circle cx="1340" cy="756" r="7" fill="#333" stroke="#ddd"/><text x="1340" y="760" text-anchor="middle" style="font-size:10px;font-weight:bold" class="w">9</text>
<rect x="1362" y="728" width="1" height="40" fill="#6a4c5c"/>
</svg>
</body></html>
